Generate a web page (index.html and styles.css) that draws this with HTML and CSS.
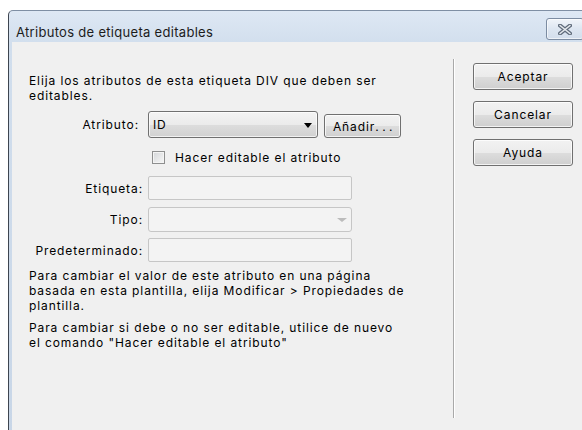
FILE: index.html
```html
<!DOCTYPE html>
<html lang="es">
<head>
<meta charset="utf-8">
<title>Atributos de etiqueta editables</title>
<link rel="stylesheet" href="styles.css">
</head>
<body>
<div class="window">
  <div class="titlebar">
    <span class="title">Atributos de etiqueta editables</span>
    <button class="close" type="button" aria-label="Cerrar">
      <svg width="14" height="11" viewBox="0 0 14 11">
        <path d="M2 1.5 L12 9.5 M12 1.5 L2 9.5" stroke="#5f6b7b" stroke-width="4" stroke-linecap="round"/>
        <path d="M2 1.5 L12 9.5 M12 1.5 L2 9.5" stroke="#e6eaef" stroke-width="1.6" stroke-linecap="round"/>
      </svg>
    </button>
  </div>
  <div class="client">
    <div class="main">
      <p class="intro">Elija los atributos de esta etiqueta DIV que deben ser<br>editables.</p>

      <div class="row row-attr">
        <label class="lbl">Atributo:</label>
        <div class="combo">
          <span>ID</span>
          <span class="arrow"></span>
        </div>
        <button class="btn add" type="button">Añadir<span class="dots">...</span></button>
      </div>

      <div class="row row-check">
        <span class="checkbox"></span>
        <span>Hacer editable el atributo</span>
      </div>

      <div class="row row-field">
        <label class="lbl">Etiqueta:</label>
        <div class="field"></div>
      </div>
      <div class="row row-field row-type">
        <label class="lbl">Tipo:</label>
        <div class="field select-off"><span class="arrow-off"></span></div>
      </div>
      <div class="row row-field row-default">
        <label class="lbl">Predeterminado:</label>
        <div class="field"></div>
      </div>

      <p class="note">Para cambiar el valor de este atributo en una página<br>basada en esta plantilla, elija Modificar &gt; Propiedades de<br>plantilla.</p>
      <p class="note note-second">Para cambiar si debe o no ser editable, utilice de nuevo<br>el comando "Hacer editable el atributo"</p>
    </div>

    <div class="separator"></div>

    <div class="actions">
      <button class="btn action" type="button">Aceptar</button>
      <button class="btn action" type="button">Cancelar</button>
      <button class="btn action" type="button">Ayuda</button>
    </div>
  </div>
</div>
</body>
</html>
```

FILE: styles.css
```css
html, body {
  margin: 0;
  background: #ffffff;
  overflow: hidden;
}

body {
  font-family: Inter, "Noto Sans", sans-serif;
  font-size: 12px;
  letter-spacing: 0.9px;
  color: #000;
}

/* Window frame */
.window {
  margin: 10px 0 0 8px;
  width: 582px;
  height: 430px;
  border-top: 1px solid #7f8fa4;
  border-left: 1px solid #3d4550;
  border-top-left-radius: 5px;
  background: linear-gradient(#dee8f4, #d1deed 34px, #c8d6e7);
}

.titlebar {
  height: 31px;
  display: flex;
  justify-content: space-between;
  align-items: flex-start;
  padding: 0 7px 0 7px;
}

.title {
  padding-top: 13px;
  font-size: 13px;
  line-height: 16px;
  letter-spacing: 0.3px;
  color: #1c1c1c;
}

.close {
  margin-top: 7px;
  width: 38px;
  height: 22px;
  padding: 0;
  border: 1px solid #7c8ca2;
  border-radius: 3px;
  background: linear-gradient(#f1f5fa, #dde6f1 50%, #d3deec);
  box-shadow: inset 0 0 0 1px rgba(255, 255, 255, 0.6);
  display: flex;
  align-items: center;
  justify-content: center;
}

.close svg {
  display: block;
}

/* Client area */
.client {
  margin-left: 3px;
  height: 388px;
  background: #f0f0f0;
  display: flex;
}

.main {
  width: 441px;
  box-sizing: border-box;
  padding: 31px 0 0 17px;
  flex: none;
}

.intro, .note {
  margin: 0;
  line-height: 15px;
  white-space: nowrap;
}

.row {
  display: flex;
}

.lbl {
  flex: none;
  width: 114px;
  margin-right: 5px;
  text-align: right;
  align-self: center;
}

.row-attr {
  margin-top: 8px;
  align-items: flex-end;
}

.row-attr .lbl {
  padding-right: 4px;
  box-sizing: border-box;
}

.combo {
  width: 170px;
  height: 27px;
  box-sizing: border-box;
  border: 1px solid #707070;
  border-radius: 3px;
  background: linear-gradient(#f3f3f3, #ebebeb 50%, #dddddd 51%, #d1d1d1);
  box-shadow: inset 0 0 0 1px rgba(255, 255, 255, 0.7);
  display: flex;
  align-items: center;
  justify-content: space-between;
  padding: 0 5px 0 4px;
}

.arrow {
  width: 0;
  height: 0;
  border-left: 4.5px solid transparent;
  border-right: 4.5px solid transparent;
  border-top: 5px solid #000;
  margin-top: 1px;
}

.btn {
  font: inherit;
  letter-spacing: inherit;
  color: #000;
  padding: 0;
  border: 1px solid #707070;
  border-radius: 3px;
  background: linear-gradient(#f2f2f2, #ebebeb 50%, #dddddd 51%, #cfcfcf);
  box-shadow: inset 0 0 0 1px rgba(255, 255, 255, 0.75);
}

.add {
  margin-left: 6px;
  width: 77px;
  height: 24px;
  padding-left: 4px;
}

.dots {
  letter-spacing: 3.5px;
}

.row-check {
  margin-top: 11px;
  height: 16px;
  align-items: center;
  padding-left: 123px;
}

.checkbox {
  width: 13px;
  height: 13px;
  box-sizing: border-box;
  border: 1px solid #8e8f8f;
  background: linear-gradient(135deg, #d4d6d9, #f7f7f7);
  box-shadow: inset 0 0 0 1px #f4f4f4;
  margin-right: 10px;
}

.row-field {
  margin-top: 11px;
}

.field {
  width: 204px;
  height: 24px;
  box-sizing: border-box;
  border: 1px solid #c6c6c6;
  border-radius: 2px;
  background: #f3f3f3;
}

.row-type {
  margin-top: 7px;
}

.row-type .field {
  height: 25px;
  border-radius: 3px;
}

.row-default {
  margin-top: 6px;
}

.select-off {
  display: flex;
  align-items: center;
  justify-content: flex-end;
  padding-right: 4px;
}

.arrow-off {
  width: 0;
  height: 0;
  border-left: 5px solid transparent;
  border-right: 5px solid transparent;
  border-top: 4px solid #bcbcbc;
  margin-top: 1px;
}

.note {
  margin-top: 6px;
}

.note-second {
  margin-top: 7px;
}

/* Etched divider between the form and the buttons */
.separator {
  flex: none;
  width: 1px;
  height: 359px;
  margin-top: 17px;
  background: #a9a9a9;
  border-right: 1px solid #ffffff;
}

.actions {
  padding: 21px 0 0 18px;
  display: flex;
  flex-direction: column;
  gap: 11px;
}

.action {
  width: 100px;
  height: 27px;
}
```
